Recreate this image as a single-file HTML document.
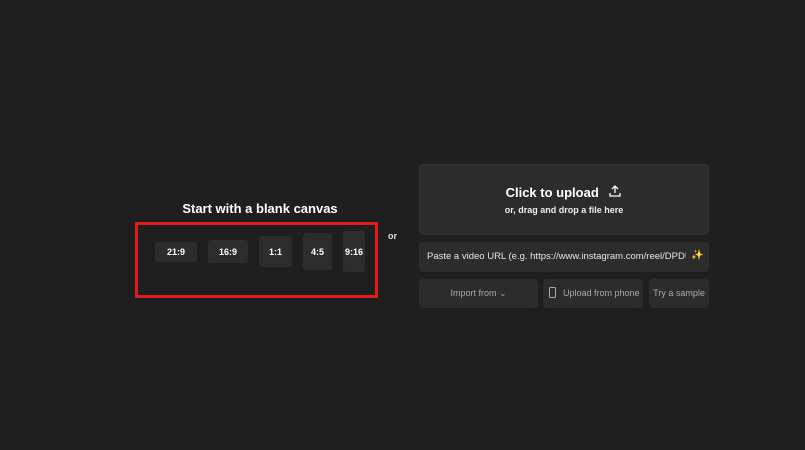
<!DOCTYPE html>
<html><head><style>
*{margin:0;padding:0;box-sizing:border-box}
body{width:805px;height:450px;background:#1f1f1f;font-family:"Liberation Sans",sans-serif;position:relative;overflow:hidden;color:#fff}
.a{position:absolute}
.r{background:#2d2d2d;border-radius:3px;display:flex;align-items:center;justify-content:center;font-size:9px;font-weight:bold;color:#fff}
.p{background:#2c2c2c;border-radius:4px;position:absolute}
</style></head><body>
<div class="a" style="left:150px;width:220px;top:201px;text-align:center;font-size:13px;font-weight:bold">Start with a blank canvas</div>
<div class="a" style="left:135px;top:222px;width:243px;height:76px;border:3px solid #e01b1b"></div>
<div class="a r" style="left:155px;top:242px;width:42px;height:20px">21:9</div>
<div class="a r" style="left:208px;top:240px;width:40px;height:23px">16:9</div>
<div class="a r" style="left:259px;top:236px;width:33px;height:31px">1:1</div>
<div class="a r" style="left:303px;top:233px;width:29px;height:37px">4:5</div>
<div class="a r" style="left:343px;top:231px;width:22px;height:41px">9:16</div>
<div class="a" style="left:388px;top:231px;font-size:9px;font-weight:bold;color:#ddd">or</div>
<div class="p" style="left:419px;top:164px;width:290px;height:71px;border:1px solid #333"></div>
<div class="a" style="left:419px;top:184px;width:290px;text-align:center;font-size:13px;font-weight:bold">Click to upload <svg width="14" height="14" viewBox="0 0 14 14" style="vertical-align:-1px;margin-left:6px" fill="none" stroke="#fff" stroke-width="1.3"><path d="M7 9V2M4 5l3-3 3 3M2 9v3h10V9"/></svg></div>
<div class="a" style="left:419px;top:205px;width:290px;text-align:center;font-size:9px;font-weight:bold;color:#eee">or, drag and drop a file here</div>
<div class="p" style="left:419px;top:242px;width:290px;height:30px"></div>
<div class="a" style="left:427px;top:251px;width:259px;overflow:hidden;font-size:9.5px;color:#e6e6e6;white-space:nowrap">Paste a video URL (e.g. https://www.instagram.com/reel/DPDUI</div>
<div class="a" style="left:691px;top:250px;font-size:10px;color:#f5d04a">✨</div>
<div class="p" style="left:419px;top:279px;width:119px;height:29px"></div>
<div class="a" style="left:419px;top:288px;width:119px;text-align:center;font-size:9px;color:#aaa">Import from &#8964;</div>
<div class="p" style="left:543px;top:279px;width:100px;height:29px"></div>
<div class="a" style="left:549px;top:287px;width:7px;height:11px;border:1px solid #aaa;border-radius:1.5px"></div>
<div class="a" style="left:563px;top:288px;font-size:9px;color:#aaa;white-space:nowrap">Upload from phone</div>
<div class="p" style="left:649px;top:279px;width:60px;height:29px"></div>
<div class="a" style="left:649px;top:288px;width:60px;text-align:center;font-size:9px;color:#aaa;white-space:nowrap">Try a sample</div>
</body></html>
